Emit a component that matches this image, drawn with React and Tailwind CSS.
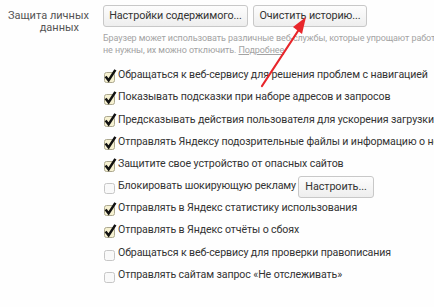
import React from 'react';

const rows = [
  { text: 'Обращаться к веб-сервису для решения проблем с навигацией', on: true },
  { text: 'Показывать подсказки при наборе адресов и запросов', on: true },
  { text: 'Предсказывать действия пользователя для ускорения загрузки страниц', on: true },
  { text: 'Отправлять Яндексу подозрительные файлы и информацию о небезопасных сайтах', on: true },
  { text: 'Защитите свое устройство от опасных сайтов', on: true },
  { text: 'Блокировать шокирующую рекламу', on: false, button: 'Настроить...' },
  { text: 'Отправлять в Яндекс статистику использования', on: true },
  { text: 'Отправлять в Яндекс отчёты о сбоях', on: true },
  { text: 'Обращаться к веб-сервису для проверки правописания', on: false },
  { text: 'Отправлять сайтам запрос «Не отслеживать»', on: false },
];

const Check = ({ on }) => (
  <svg width="15" height="16" viewBox="0 0 15 16" className="shrink-0">
    <rect
      x="1.5" y="4.5" width="10" height="10" rx="2"
      fill={on ? '#f6f1d1' : '#f9f9f9'}
      stroke={on ? '#aca88f' : '#c6c6c6'}
    />
    {on && (
      <path d="M2.6 8.6 L5.6 12.4 L12.4 1.8" fill="none" stroke="#111" strokeWidth="2.5" />
    )}
  </svg>
);

const Btn = ({ children, className = '' }) => (
  <div
    className={`h-[22px] flex items-center justify-center rounded-[3px] border border-[#c8c8c8] bg-gradient-to-b from-[#fdfdfd] to-[#eeeeee] text-[10.8px] tracking-[-0.1px] text-[#333] ${className}`}
  >
    {children}
  </div>
);

export default function App() {
  return (
    <div
      className="relative w-[434px] h-[307px] overflow-hidden bg-[#fefefe] text-[#333]"
      style={{ fontFamily: 'Roboto, "Noto Sans", sans-serif' }}
    >
      <div className="flex">
        {/* section label */}
        <div className="w-[103px] shrink-0 pr-[24px] pt-[10px] text-right text-[11px] leading-[12px] text-[#555] whitespace-nowrap">
          <div className="text-left pl-[8px]">Защита личных</div>
          <div>данных</div>
        </div>

        {/* settings column */}
        <div className="flex-1 pt-[5px] whitespace-nowrap">
          <div className="flex gap-[5px]">
            <Btn className="w-[145px]">Настройки содержимого...</Btn>
            <Btn className="w-[114px]">Очистить историю...</Btn>
          </div>

          <div className="mt-[6px] text-[9px] tracking-[-0.1px] leading-[11.5px] text-[#a3a3a3]">
            <div>Браузер может использовать различные веб-службы, которые упрощают работу в</div>
            <div>
              не нужны, их можно отключить. <span className="underline">Подробнее</span>
            </div>
          </div>

          <div className="mt-[9px] flex flex-col">
            {rows.map((r, i) => (
              <div key={i} className="h-[22.2px] flex items-center text-[10.6px] tracking-[-0.1px]">
                <Check on={r.on} />
                <span className="-mt-[2px]">{r.text}</span>
                {r.button && <Btn className="w-[76px] ml-[2px]">{r.button}</Btn>}
              </div>
            ))}
          </div>
        </div>
      </div>

      {/* red annotation arrow */}
      <svg className="absolute left-0 top-0" width="434" height="307" viewBox="0 0 434 307">
        <line x1="262" y1="86" x2="298" y2="31" stroke="#e8262b" strokeWidth="2.2" strokeLinecap="round" />
        <polygon points="306,17 293,27 302,34" fill="#e8262b" />
      </svg>
    </div>
  );
}
